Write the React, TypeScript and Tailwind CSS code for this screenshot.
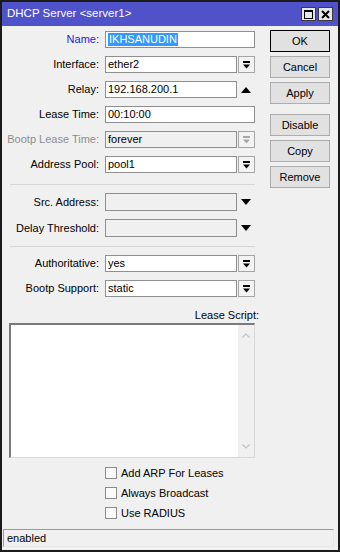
import React from "react";

const DropIcon = ({ color = "#000" }: { color?: string }) => (
  <svg width="9" height="8" viewBox="0 0 9 8">
    <rect x="1" y="0" width="7" height="2" fill={color} />
    <path d="M1 3.5h7L4.5 7.5z" fill={color} />
  </svg>
);

const DropBtn = ({ disabled = false }: { disabled?: boolean }) => (
  <div className="ml-[1px] w-[17px] h-[17px] border border-[#a5a5a5] bg-[#f3f3f3] flex items-center justify-center">
    <DropIcon color={disabled ? "#a8a8a8" : "#000"} />
  </div>
);

const Field = ({
  value,
  w = "w-[132px]",
  h = "h-[17px]",
  bg = "bg-white",
}: {
  value?: React.ReactNode;
  w?: string;
  h?: string;
  bg?: string;
}) => (
  <div className={`${w} ${h} ${bg} border border-[#8f8f8f] flex items-center pl-[2px] text-black overflow-hidden whitespace-nowrap`}>
    {value}
  </div>
);

const Row = ({
  label,
  labelClass = "text-black",
  className = "",
  children,
}: {
  label: string;
  labelClass?: string;
  className?: string;
  children: React.ReactNode;
}) => (
  <div className={`flex items-center ${className}`}>
    <div className={`w-[97px] text-right whitespace-nowrap ${labelClass}`}>{label}</div>
    <div className="ml-[6px] flex items-center">{children}</div>
  </div>
);

const Btn = ({ label, isDefault = false, className = "" }: { label: string; isDefault?: boolean; className?: string }) => (
  <div
    className={`w-[60px] h-[22px] flex items-center justify-center bg-[#e1e1e1] border ${
      isDefault ? "border-black" : "border-[#adadad]"
    } text-black ${className}`}
  >
    {label}
  </div>
);

const Check = ({ label, className = "" }: { label: string; className?: string }) => (
  <div className={`flex items-center h-[12px] ${className}`}>
    <div className="ml-[103px] w-[12px] h-[12px] border border-[#8a8a8a] bg-[#fbfbfb]" />
    <div className="ml-[4px] text-black whitespace-nowrap leading-none">{label}</div>
  </div>
);

const Separator = ({ className = "" }: { className?: string }) => (
  <div className={`ml-[8px] w-[245px] h-[1px] bg-[#d5d5d5] ${className}`} />
);

export default function App() {
  return (
    <div className="w-[340px] h-[552px] border-2 border-[#1b1b1b] bg-[#f0f0f0] flex flex-col font-['Liberation_Sans',Arial,sans-serif] text-[11px] leading-none overflow-hidden">
      {/* Title bar */}
      <div className="h-[24px] bg-[#4f52c8] flex items-center pl-[5px] pr-[5px] shrink-0">
        <div className="text-white text-[11.5px] whitespace-nowrap">DHCP Server &lt;server1&gt;</div>
        <div className="ml-auto flex items-center gap-[2px]">
          <div className="w-[15px] h-[14px] bg-[#e6e6e6] border border-[#3a3a3a] flex items-center justify-center">
            <svg width="9" height="9" viewBox="0 0 9 9">
              <rect x="0.5" y="0.5" width="8" height="8" fill="none" stroke="#000" strokeWidth="1" />
              <rect x="0" y="0" width="9" height="2" fill="#000" />
            </svg>
          </div>
          <div className="w-[15px] h-[14px] bg-[#e6e6e6] border border-[#3a3a3a] flex items-center justify-center">
            <svg width="9" height="9" viewBox="0 0 9 9">
              <path d="M1 1L8 8M8 1L1 8" stroke="#000" strokeWidth="2" />
            </svg>
          </div>
        </div>
      </div>

      {/* Body */}
      <div className="flex flex-1">
        {/* Left column */}
        <div className="w-[260px] flex flex-col">
          <Row label="Name:" labelClass="text-[#2222dd]" className="mt-[5px] h-[17px]">
            <Field
              w="w-[150px]"
              value={<span className="bg-[#3399ff] text-white px-[1px] h-[13px] flex items-center">IKHSANUDIN</span>}
            />
          </Row>
          <Row label="Interface:" className="mt-[8px] h-[17px]">
            <Field value="ether2" />
            <DropBtn />
          </Row>
          <Row label="Relay:" className="mt-[8px] h-[17px]">
            <Field value="192.168.200.1" />
            <div className="w-[18px] flex justify-center">
              <svg width="10" height="6" viewBox="0 0 10 6">
                <path d="M0 6L5 0L10 6z" fill="#000" />
              </svg>
            </div>
          </Row>
          <Row label="Lease Time:" className="mt-[8px] h-[17px]">
            <Field w="w-[150px]" value="00:10:00" />
          </Row>
          <Row label="Bootp Lease Time:" labelClass="text-[#8d8d8d]" className="mt-[8px] h-[17px]">
            <Field value="forever" bg="bg-[#f0f0f0]" />
            <DropBtn disabled />
          </Row>
          <Row label="Address Pool:" className="mt-[8px] h-[17px]">
            <Field value="pool1" />
            <DropBtn />
          </Row>

          <Separator className="mt-[11px]" />

          <Row label="Src. Address:" className="mt-[8px] h-[18px]">
            <Field h="h-[18px]" bg="bg-[#f0f0f0]" />
            <div className="w-[18px] flex justify-center">
              <svg width="10" height="6" viewBox="0 0 10 6">
                <path d="M0 0L10 0L5 6z" fill="#000" />
              </svg>
            </div>
          </Row>
          <Row label="Delay Threshold:" className="mt-[8px] h-[18px]">
            <Field h="h-[18px]" bg="bg-[#f0f0f0]" />
            <div className="w-[18px] flex justify-center">
              <svg width="10" height="6" viewBox="0 0 10 6">
                <path d="M0 0L10 0L5 6z" fill="#000" />
              </svg>
            </div>
          </Row>

          <Separator className="mt-[9px]" />

          <Row label="Authoritative:" className="mt-[8px] h-[17px]">
            <Field value="yes" />
            <DropBtn />
          </Row>
          <Row label="Bootp Support:" className="mt-[8px] h-[17px]">
            <Field value="static" />
            <DropBtn />
          </Row>

          <div className="mt-[11px] h-[14px] flex items-center justify-end pr-[3px] text-black">Lease Script:</div>

          <div className="mt-[1px] ml-[7px] w-[246px] h-[135px] flex bg-white border-t-2 border-l-2 border-t-[#7a7a7a] border-l-[#7a7a7a] border-r border-b border-r-[#d8d8d8] border-b-[#d8d8d8]">
            <div className="flex-1" />
            <div className="w-[16px] bg-[#f0f0f0] flex flex-col items-center justify-between py-[8px]">
              <svg width="8" height="5" viewBox="0 0 8 5">
                <path d="M0.5 4.5L4 1L7.5 4.5" fill="none" stroke="#c4c4c4" strokeWidth="1.2" />
              </svg>
              <svg width="8" height="5" viewBox="0 0 8 5">
                <path d="M0.5 0.5L4 4L7.5 0.5" fill="none" stroke="#c4c4c4" strokeWidth="1.2" />
              </svg>
            </div>
          </div>

          <Check label="Add ARP For Leases" className="mt-[9px]" />
          <Check label="Always Broadcast" className="mt-[8px]" />
          <Check label="Use RADIUS" className="mt-[8px]" />
        </div>

        {/* Right column */}
        <div className="ml-[8px] flex flex-col">
          <Btn label="OK" isDefault className="mt-[4px]" />
          <Btn label="Cancel" className="mt-[4px]" />
          <Btn label="Apply" className="mt-[4px]" />
          <Btn label="Disable" className="mt-[10px]" />
          <Btn label="Copy" className="mt-[4px]" />
          <Btn label="Remove" className="mt-[4px]" />
        </div>
      </div>

      {/* Status bar */}
      <div className="ml-[1px] mr-[4px] mb-[3px] h-[18px] shrink-0 flex items-center pl-[3px] bg-[#f0f0f0] border-t border-l border-t-[#9a9a9a] border-l-[#9a9a9a] border-r border-b border-r-[#e6e6e6] border-b-[#e6e6e6] text-black">
        enabled
      </div>
    </div>
  );
}
